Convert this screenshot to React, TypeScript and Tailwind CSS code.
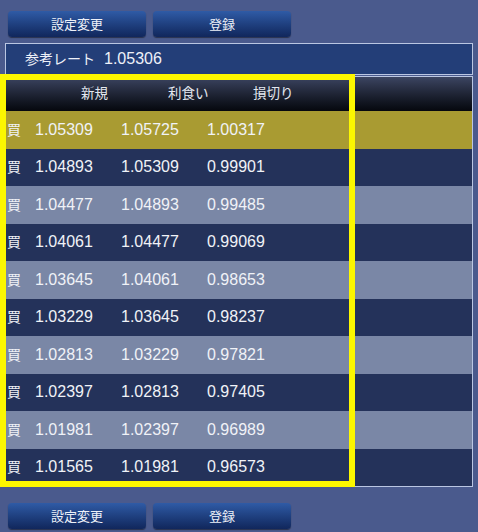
import React from "react";

const rows = [
  ["1.05309", "1.05725", "1.00317"],
  ["1.04893", "1.05309", "0.99901"],
  ["1.04477", "1.04893", "0.99485"],
  ["1.04061", "1.04477", "0.99069"],
  ["1.03645", "1.04061", "0.98653"],
  ["1.03229", "1.03645", "0.98237"],
  ["1.02813", "1.03229", "0.97821"],
  ["1.02397", "1.02813", "0.97405"],
  ["1.01981", "1.02397", "0.96989"],
  ["1.01565", "1.01981", "0.96573"],
];

function Btn({ label }: { label: string }) {
  return (
    <div className="w-[138px] h-[26px] rounded-[4px] bg-gradient-to-b from-[#2f5ba6] to-[#11275c] shadow-[0_1px_1px_rgba(0,0,0,0.45)] flex items-center justify-center text-[13px] text-[#eef1f8] leading-none">
      {label}
    </div>
  );
}

function Buttons() {
  return (
    <div className="flex gap-[7px] pl-[8px]">
      <Btn label="設定変更" />
      <Btn label="登録" />
    </div>
  );
}

export default function App() {
  return (
    <div
      className="relative w-[478px] h-[532px] overflow-hidden bg-[#4a5a8d] pt-[11px]"
      style={{ fontFamily: '"Liberation Sans", "Noto Sans CJK JP", sans-serif' }}
    >
      <Buttons />
      <div className="mx-[5px] mt-[6px] h-[32px] border border-[#bac6e2] bg-[#233e78] flex items-center pl-[19px] text-[#eef1f8]">
        <span className="text-[14px] leading-none">参考レート</span>
        <span className="text-[16px] leading-none ml-[9px]">1.05306</span>
      </div>
      <div className="mx-[5px] mt-[1px] border border-[#bac6e2]">
        <div className="h-[34px] bg-gradient-to-b from-[#3c4562] to-[#06080e] flex items-center pl-[75px] text-[13.5px] text-[#e4e8f0] leading-none">
          <span className="w-[87px]">新規</span>
          <span className="w-[85px]">利食い</span>
          <span>損切り</span>
        </div>
        {rows.map((r, i) => {
          const bg = i === 0 ? "bg-[#a99b32]" : i % 2 === 1 ? "bg-[#24325a]" : "bg-[#7a87a6]";
          return (
            <div key={i} className={`h-[37.5px] flex items-center ${bg} text-[#f0f2f7] leading-none`}>
              <span className="w-[29px] pl-[1px] text-[14px]">買</span>
              <span className="w-[86px] text-[16px]">{r[0]}</span>
              <span className="w-[86px] text-[16px]">{r[1]}</span>
              <span className="text-[16px]">{r[2]}</span>
            </div>
          );
        })}
      </div>
      <div className="mt-[16px]">
        <Buttons />
      </div>
      <div className="absolute left-0 top-[74px] w-[355px] h-[413px] border-[6px] border-[#fcf700] pointer-events-none" />
    </div>
  );
}
